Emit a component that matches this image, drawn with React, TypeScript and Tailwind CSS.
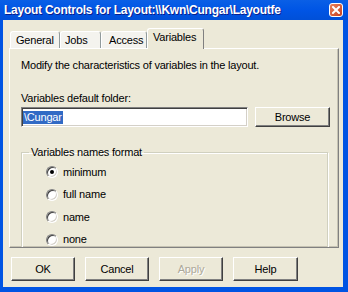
const tabs = ["General", "Jobs", "Access"];
const formats = ["minimum", "full name", "name", "none"];

function Radio({ checked }: { checked?: boolean }) {
  return (
    <span className="flex h-[12px] w-[12px] shrink-0 items-center justify-center rounded-full border border-t-[#808080] border-l-[#808080] border-r-white border-b-white bg-white shadow-[inset_1px_1px_0_#404040,inset_-1px_-1px_0_#d4d0c8]">
      {checked && <span className="h-[4px] w-[4px] rounded-full bg-black" />}
    </span>
  );
}

function Button({ label, disabled, className }: { label: string; disabled?: boolean; className?: string }) {
  return (
    <div
      className={`flex items-center justify-center border border-t-white border-l-white border-r-[#404040] border-b-[#404040] bg-[#ece9d8] shadow-[inset_-1px_-1px_0_#808080] ${
        disabled ? "text-[#aca899] [text-shadow:1px_1px_0_#fff]" : "text-black"
      } ${className ?? ""}`}
    >
      {label}
    </div>
  );
}

export default function App() {
  return (
    <div className="flex h-[292px] w-[348px] flex-col overflow-hidden bg-[#0054e3] font-['Liberation_Sans',Arial,sans-serif] text-[11px] leading-[13px] tracking-[-0.2px] text-black">
      {/* title bar */}
      <div className="flex h-[20px] shrink-0 items-center bg-gradient-to-b from-[#0a5fe6] via-[#0055e5] to-[#0050d8] pl-[4px] pr-[5px]">
        <span className="flex-1 truncate text-[12px] font-bold tracking-[-0.25px] text-white [text-shadow:1px_1px_0_#0a1e8c]">
          Layout Controls for Layout:\\Kwn\Cungar\Layoutfe
        </span>
        <div className="flex h-[14px] w-[14px] items-center justify-center rounded-[3px] border border-white bg-gradient-to-br from-[#e8815c] to-[#c9401c]">
          <svg width="8" height="8" viewBox="0 0 8 8">
            <path d="M1 1L7 7M7 1L1 7" stroke="white" strokeWidth="2" strokeLinecap="square" />
          </svg>
        </div>
      </div>

      {/* dialog body */}
      <div className="ml-[3px] mr-[5px] mb-[5px] flex flex-1 flex-col bg-[#ece9d8]">
        {/* tabs */}
        <div className="mt-[8px] flex h-[20px] items-end pl-[7px]">
          {tabs.map((t) => (
            <div
              key={t}
              className={`flex h-[17px] items-center rounded-t-[3px] border-t border-l border-r border-t-white border-l-white border-r-[#919b9c] bg-[#f4f3ee] ${
                t === "General" ? "w-[50px] pl-[5px]" : t === "Jobs" ? "w-[41px] pl-[4px]" : "w-[46px] pl-[7px]"
              }`}
            >
              {t}
            </div>
          ))}
          <div className="relative z-10 -mb-[1px] flex h-[21px] w-[57px] items-start rounded-t-[3px] border-t border-l border-r border-t-white border-l-white border-r-[#808080] bg-[#ece9d8] pl-[5px] pt-[2px]">
            Variables
          </div>
        </div>

        {/* panel */}
        <div className="ml-[6px] flex h-[200px] w-[330px] flex-col overflow-hidden border border-t-white border-l-white border-r-[#808080] border-b-[#808080] pl-[11px] shadow-[inset_-1px_-1px_0_#c5c2b2]">
          <p className="mt-[10px]">Modify the characteristics of variables in the layout.</p>
          <p className="mt-[20px]">Variables default folder:</p>
          <div className="mt-[2px] flex items-center">
            <div className="flex h-[20px] w-[227px] items-center border border-t-[#808080] border-l-[#808080] border-r-white border-b-white bg-white pl-[1px] shadow-[inset_1px_1px_0_#404040,inset_-1px_-1px_0_#d4d0c8]">
              <span className="bg-[#316ac5] px-[1px] text-white">\Cungar</span>
            </div>
            <Button label="Browse" className="ml-[7px] h-[20px] w-[75px]" />
          </div>

          <fieldset className="mt-[19px] w-[307px] shrink-0 border border-[#d0d0bf] pb-[20px] shadow-[1px_1px_0_#fff,inset_1px_1px_0_#fff]">
            <legend className="ml-[7px] px-[2px]">Variables names format</legend>
            <div className="flex flex-col gap-[9.5px] pt-[6.5px] pl-[24px]">
              {formats.map((f, i) => (
                <div key={f} className="flex h-[13px] items-center gap-[5px]">
                  <Radio checked={i === 0} />
                  <span>{f}</span>
                </div>
              ))}
            </div>
          </fieldset>
        </div>

        {/* buttons */}
        <div className="mt-[9px] flex gap-[10px] pl-[8px]">
          <Button label="OK" className="h-[24px] w-[64px]" />
          <Button label="Cancel" className="h-[24px] w-[64px]" />
          <Button label="Apply" disabled className="h-[24px] w-[64px]" />
          <Button label="Help" className="h-[24px] w-[65px]" />
        </div>
      </div>
    </div>
  );
}
